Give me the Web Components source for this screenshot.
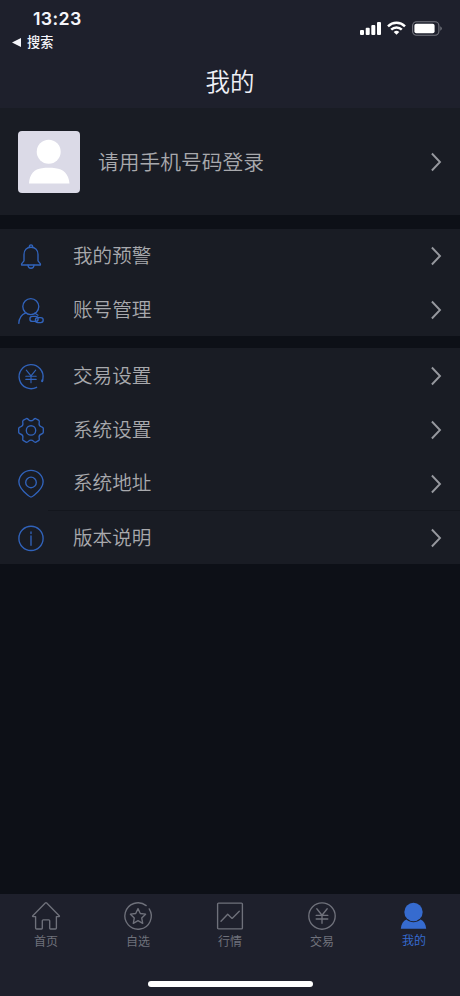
<!DOCTYPE html>
<html lang="zh-CN">
<head>
<meta charset="utf-8">
<title>我的</title>
<style>
  html, body {
    margin: 0;
    height: 100%;
    background: #0d1017;
    overflow: hidden;
    font-family: "Noto Sans CJK SC", sans-serif;
  }
</style>
</head>
<body>
<mine-page></mine-page>

<script>
// Line icons of the menu and of the tab bar, all drawn in a 28x28 box
const icons = {
  bell: `<path d="M4.6 23v-1.2L7 18.8v-6.3C7 8 9.8 5.2 14 5.2s7 2.8 7 7.3v6.3l2.4 3V23z"/>
    <path d="M12.3 5.1c0-3 3.4-3 3.4 0M11 23.2c.3 4 5.7 4 6 0"/>`,
  account: `<circle cx="13.8" cy="10.6" r="8"/>
    <path d="M8.7 16.8C4.2 18.6 2 22.3 1.8 27.4M18 17.2l3 2"/>
    <rect x="12.9" y="20.4" width="8.2" height="5" rx="2.5"/><rect x="18.4" y="21.6" width="7.8" height="5" rx="2.5"/>`,
  yen: `<path d="M19.6 25.3A12 12 0 1 1 25.9 16.7L25.5 19"/>
    <path d="M25.3 18.3l-.2.9" stroke-width="2"/>
    <path d="M9.3 8.2l4.7 5.6 4.7-5.6M14 13.8v7M8.8 14.2h10.4M8.8 17.4h10.4" stroke-width="1.1"/>`,
  gear: `<path d="M9.5 2.5c.8 0 1.5.5 2.1 1.2 1.3 1.4 3.5 1.4 4.8 0 .6-.7 1.3-1.2 2.1-1.2l3.4 1.9c.5.5.5 1.3.3 2.2-.4 1.8.6 3.6 2.4 4.2 1.1.3 1.6.8 1.7 1.6v4c-.1.8-.6 1.3-1.7 1.6-1.8.6-2.8 2.4-2.4 4.2.2.9.2 1.7-.3 2.2l-3.4 1.9c-.8 0-1.5-.5-2.1-1.2-1.3-1.4-3.5-1.4-4.8 0-.6.7-1.3 1.2-2.1 1.2l-3.4-1.9c-.5-.5-.5-1.3-.3-2.2.4-1.8-.6-3.6-2.4-4.2-1.1-.3-1.6-.8-1.7-1.6v-4c.1-.8.6-1.3 1.7-1.6 1.8-.6 2.8-2.4 2.4-4.2-.2-.9-.2-1.7.3-2.2z"/>
    <circle cx="14" cy="14.4" r="4.7"/>`,
  pin: `<path d="M14 27.1c-1 0-2-.8-3.4-2C5.2 20.7 1.9 16.7 1.9 12.1a12.1 11.8 0 0 1 24.2 0c0 4.6-3.3 8.6-8.7 13-1.4 1.2-2.4 2-3.4 2z"/>
    <circle cx="14" cy="12.4" r="5.3"/>`,
  info: `<circle cx="14" cy="14.4" r="12.1"/><path d="M14 11.8v9.4M14 8v1.6"/>`,
  home: `<path d="M3.6 14.6H1c-.5 0-.6-.5-.2-.9L13.3 1c.5-.5.9-.5 1.4 0l12.5 12.7c.4.4.3.9-.2.9h-2.6V26c0 .7-.3 1-1 1h-5c-.5 0-.7-.2-.7-.7v-7.6c0-.6-.3-.9-.9-.9h-5.6c-.6 0-.9.3-.9.9v7.6c0 .5-.2.7-.7.7h-5c-.7 0-1-.3-1-1V14.6z"/>`,
  star: `<path d="M22.2 3.6A13.2 13.2 0 1 0 25.2 6.9"/>
    <path d="M14 6.6l2.3 4.9 5.3.7-3.9 3.7 1 5.4-4.7-2.6-4.7 2.6 1-5.4-3.9-3.7 5.3-.7z"/>`,
  chart: `<rect x="1.6" y="1.1" width="24.8" height="25.8" rx="1"/><path d="M5 19.2l6.7-7 4.4 4.2 7.2-7.2"/>`,
  trade: `<circle cx="14" cy="14" r="13.2"/>
    <path d="M8.8 6.8l5.2 6.4 5.2-6.4M14 13.2v8M8.2 13.4h11.6M8.2 17h11.6"/>`,
  mine: `<g fill="currentColor" stroke="none"><circle cx="13.5" cy="10" r="9.2"/>
    <path d="M.8 26.8c.4-4.7 2.6-8 5.6-9.3 4.2 3.5 10 3.5 14.2 0 3 1.3 5.2 4.6 5.6 9.3z"/></g>`
};

class LineIcon extends HTMLElement {
  constructor(){
    super();
    this.attachShadow({mode: 'open'});
  }
  connectedCallback(){
    this.shadowRoot.innerHTML = `
      <style>
        :host{ display: block; width: 28px; height: 28px; flex: none; }
        svg{ display: block; overflow: visible; }
      </style>
      <svg width="28" height="28" viewBox="0 0 28 28" fill="none" stroke="currentColor"
        stroke-width="1.35" stroke-linecap="round" stroke-linejoin="round">${icons[this.getAttribute('name')]}</svg>
    `;
  }
}
customElements.define('line-icon', LineIcon);

class ArrowRight extends HTMLElement {
  constructor(){
    super();
    this.attachShadow({mode: 'open'});
    this.shadowRoot.innerHTML = `
      <style>
        :host{ display: block; flex: none; margin-left: auto; color: #96989e; }
        svg{ display: block; }
      </style>
      <svg width="12" height="20" viewBox="0 0 12 20" fill="none" stroke="currentColor" stroke-width="1.9">
        <path d="M1.9 1.5L10 10l-8.1 8.5"/>
      </svg>
    `;
  }
}
customElements.define('arrow-right', ArrowRight);

class StatusBar extends HTMLElement {
  constructor(){
    super();
    this.attachShadow({mode: 'open'});
    this.shadowRoot.innerHTML = `
      <style>
        :host{ display: flex; justify-content: space-between; height: 54px; color: #f4f5fa; }
        .left{ padding: 8px 0 0 12px; }
        .time{ margin-left: 21px; font: 600 17.8px/21px Inter, sans-serif; letter-spacing: .35px; }
        .back{ display: flex; align-items: center; gap: 6px; margin-top: 4px; font-size: 13.2px; line-height: 18px; font-weight: 500; }
        .back svg{ margin-top: 1px; }
        .right{ display: flex; align-items: center; gap: 6px; height: 16px; padding: 20px 18px 0 0; }
      </style>
      <div class="left">
        <div class="time">13:23</div>
        <div class="back">
          <svg width="9" height="9" viewBox="0 0 9 9" fill="currentColor"><path d="M0 4.5L9 0v9z"/></svg>
          <span>搜索</span>
        </div>
      </div>
      <div class="right">
        <svg width="21" height="14" viewBox="0 0 21 14" fill="#fff">
          <rect x="0" y="9" width="4" height="5" rx="1"/><rect x="5.7" y="6.8" width="4" height="7.2" rx="1"/>
          <rect x="11.3" y="4" width="4" height="10" rx="1"/><rect x="17" y="1" width="4" height="13" rx="1"/>
        </svg>
        <svg width="19" height="14" viewBox="0 0 19 14" fill="none" stroke="#fff" stroke-width="2.5">
          <path d="M1 5.3a12.2 12.2 0 0 1 17 0M4.2 8.7a7.6 7.6 0 0 1 10.6 0"/>
          <path d="M9.5 13.7L6.7 11a4 4 0 0 1 5.6 0z" fill="#fff" stroke="none"/>
        </svg>
        <svg width="30" height="15" viewBox="0 0 30 15">
          <rect x=".6" y=".8" width="26.3" height="13.4" rx="4" fill="none" stroke="#74767f" stroke-width="1.1"/>
          <rect x="2.4" y="2.8" width="20.2" height="9.4" rx="2" fill="#fff"/>
          <path d="M28.3 5.2q1.5.8 1.5 2.3t-1.5 2.3z" fill="#74767f"/>
        </svg>
      </div>
    `;
  }
}
customElements.define('status-bar', StatusBar);

class TitleBar extends HTMLElement {
  constructor(){
    super();
    this.attachShadow({mode: 'open'});
    this.shadowRoot.innerHTML = `
      <style>
        :host{ display: block; height: 54px; line-height: 53px; text-align: center; font-size: 24.5px; color: #eff0f6; font-weight: 350; }
      </style>
      <slot></slot>
    `;
  }
}
customElements.define('title-bar', TitleBar);

class UserCard extends HTMLElement {
  constructor(){
    super();
    this.attachShadow({mode: 'open'});
    this.shadowRoot.innerHTML = `
      <style>
        :host{ display: flex; align-items: center; box-sizing: border-box; height: 107px; padding: 0 18px; background: #191c24; color: #a8a9ad; font-size: 20.75px; line-height: 30px; font-weight: 350; }
        .avatar{ flex: none; width: 62px; height: 62px; margin-right: 18px; border-radius: 4px; background: #dbdae7; }
        span{ padding-bottom: 2px; }
      </style>
      <svg class="avatar" viewBox="0 0 62 62" fill="#fff">
        <circle cx="30.7" cy="20.7" r="12"/>
        <path d="M11 52.4c.4-9 5.6-14.6 13-15.1 4.5-.6 9-.6 13.5 0 7.4.5 13.5 6.1 14 15.1z"/>
      </svg>
      <span><slot></slot></span>
      <arrow-right></arrow-right>
    `;
  }
}
customElements.define('user-card', UserCard);

class MenuGroup extends HTMLElement {
  constructor(){
    super();
    this.attachShadow({mode: 'open'});
    this.shadowRoot.innerHTML = `
      <style>
        :host{ display: block; box-sizing: border-box; background: #191c24; overflow: hidden; }
      </style>
      <slot></slot>
    `;
  }
}
customElements.define('menu-group', MenuGroup);

class MenuRow extends HTMLElement {
  constructor(){
    super();
    this.attachShadow({mode: 'open'});
  }
  connectedCallback(){
    this.shadowRoot.innerHTML = `
      <style>
        :host{ display: flex; align-items: center; box-sizing: border-box; height: 54px; padding: 0 18px 0 17px; color: #a8a9ad; font-size: 19.6px; line-height: 28px; font-weight: 350; }
        :host([line]){ background: linear-gradient(#13161d, #13161d) 48px 100% / 100% 1px no-repeat; }
        line-icon{ margin-right: 28px; color: #3163bb; }
        span{ padding-bottom: 3px; }
        :host([line]) span{ padding-bottom: 4px; }
      </style>
      <line-icon name="${this.getAttribute('icon')}"></line-icon>
      <span><slot></slot></span>
      <arrow-right></arrow-right>
    `;
  }
}
customElements.define('menu-row', MenuRow);

class TabItem extends HTMLElement {
  constructor(){
    super();
    this.attachShadow({mode: 'open'});
  }
  connectedCallback(){
    this.shadowRoot.innerHTML = `
      <style>
        :host{ display: flex; flex: 1; flex-direction: column; align-items: center; gap: 2px; padding-top: 8px; color: #6f717b; font-size: 12px; line-height: 18px; }
        :host([active]){ color: #366bcf; gap: 1px; }
      </style>
      <line-icon name="${this.getAttribute('icon')}"></line-icon>
      <slot></slot>
    `;
  }
}
customElements.define('tab-item', TabItem);

class TabBar extends HTMLElement {
  constructor(){
    super();
    this.attachShadow({mode: 'open'});
    this.shadowRoot.innerHTML = `
      <style>
        :host{ display: flex; flex-direction: column; height: 102px; background: #1e202c; }
        nav{ display: flex; height: 87px; }
        .home{ width: 165px; height: 6px; margin: 0 auto; border-radius: 3px; background: #fff; }
      </style>
      <nav><slot></slot></nav>
      <div class="home"></div>
    `;
  }
}
customElements.define('tab-bar', TabBar);

class MinePage extends HTMLElement {
  constructor(){
    super();
    this.attachShadow({mode: 'open'});
    this.shadowRoot.innerHTML = `
      <style>
        :host{ display: flex; flex-direction: column; height: 100vh; }
        header{ background: #1e202c; }
        .alerts{ height: 107px; margin-top: 14px; }
        .settings{ height: 216px; margin-top: 12px; padding-top: 1px; }
        tab-bar{ margin-top: auto; }
      </style>
      <header>
        <status-bar></status-bar>
        <title-bar>我的</title-bar>
      </header>
      <user-card>请用手机号码登录</user-card>
      <menu-group class="alerts">
        <menu-row icon="bell">我的预警</menu-row>
        <menu-row icon="account">账号管理</menu-row>
      </menu-group>
      <menu-group class="settings">
        <menu-row icon="yen">交易设置</menu-row>
        <menu-row icon="gear">系统设置</menu-row>
        <menu-row icon="pin" line>系统地址</menu-row>
        <menu-row icon="info">版本说明</menu-row>
      </menu-group>
      <tab-bar>
        <tab-item icon="home">首页</tab-item>
        <tab-item icon="star">自选</tab-item>
        <tab-item icon="chart">行情</tab-item>
        <tab-item icon="trade">交易</tab-item>
        <tab-item icon="mine" active>我的</tab-item>
      </tab-bar>
    `;
  }
}
customElements.define('mine-page', MinePage);
</script>
</body>
</html>
